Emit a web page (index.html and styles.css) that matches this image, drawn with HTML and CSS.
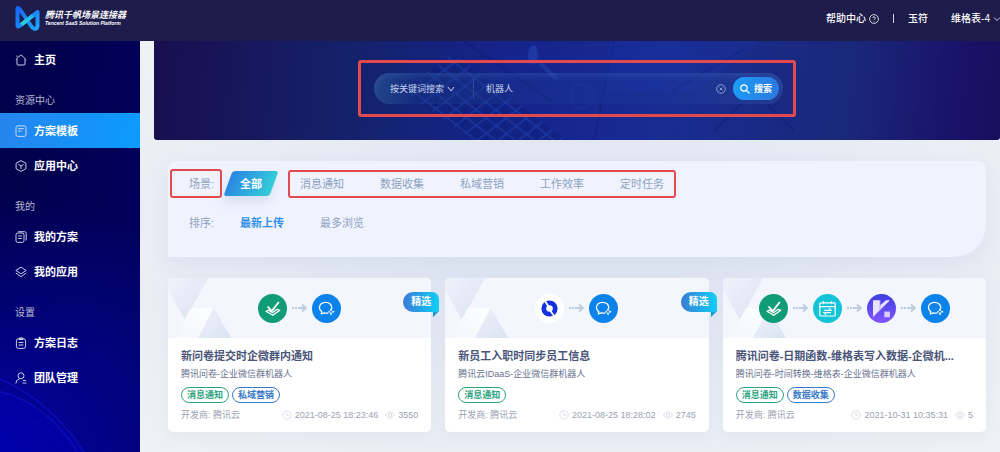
FILE: index.html
```html
<!DOCTYPE html>
<html lang="zh-CN">
<head>
<meta charset="utf-8">
<meta name="viewport" content="width=device-width, initial-scale=1">
<title>腾讯千帆场景连接器</title>
<link rel="stylesheet" href="styles.css">
</head>
<body>
<svg class="defs" aria-hidden="true">
  <defs>
    <linearGradient id="g-logo" x1="0" y1="0" x2="1" y2="1"><stop offset="0" stop-color="#1668f5"/><stop offset="1" stop-color="#20a4ff"/></linearGradient>
    <linearGradient id="g-logo2" x1="0" y1="1" x2="1" y2="0"><stop offset="0" stop-color="#27d9d0"/><stop offset="1" stop-color="#1fb4f0"/></linearGradient>
    <linearGradient id="g-vika" x1="0" y1="0" x2="0" y2="1"><stop offset="0" stop-color="#3f3fe0"/><stop offset="1" stop-color="#8156ff"/></linearGradient>
    <linearGradient id="g-badge" x1="0" y1="0" x2="1" y2="0"><stop offset="0" stop-color="#3a7bd5"/><stop offset="1" stop-color="#0fd0f5"/></linearGradient>
    <linearGradient id="g-tri" x1="0" y1="0" x2="1" y2="1"><stop offset="0" stop-color="#eef2fa"/><stop offset="1" stop-color="#dbe3f2"/></linearGradient>
    <linearGradient id="g-tri2" x1="0" y1="1" x2="1" y2="0"><stop offset="0" stop-color="#f3f6fc"/><stop offset="1" stop-color="#fdfeff"/></linearGradient>
  </defs>
  <symbol id="survey" viewBox="0 0 29 29"><circle cx="14.500" cy="14.500" r="14.500" fill="#119c78"/><path d="M9.500 12.500l4.300 4.500 7-9" fill="none" stroke="#fff" stroke-width="1.800"/><path d="M11 15.700l-3 1.600 6.800 4 7-5-2.700-1-4.500 3.400-4-2.300" fill="none" stroke="#fff" stroke-width="1.300" stroke-linejoin="round"/></symbol>
  <symbol id="wecom" viewBox="0 0 29 29"><circle cx="14.500" cy="14.500" r="14.500" fill="#0b83ea"/><path d="M16 18.900c-1.200.3-2.500.3-3.800-.1L9.300 20l.4-2.400C8 16.400 7.400 15 7.400 13.600c0-3 2.700-5.300 6.200-5.300s6.100 2.200 6.100 5v.9" fill="none" stroke="#fff" stroke-width="1.300" stroke-linecap="round" stroke-linejoin="round"/><path d="M19 15.400c.3 1.200 1 1.900 2.500 2.300-1.500.4-2.200 1.100-2.500 2.400-.3-1.300-1-2-2.400-2.400 1.400-.4 2.100-1.100 2.400-2.300z" fill="none" stroke="#fff" stroke-width="1"/><circle cx="19" cy="15.300" r=".8" fill="#fff"/><circle cx="21.500" cy="17.700" r=".8" fill="#fff"/><circle cx="19" cy="20.200" r=".8" fill="#fff"/></symbol>
  <symbol id="calendar" viewBox="0 0 29 29"><circle cx="14.500" cy="14.500" r="14.500" fill="#13c4d8"/><g fill="none" stroke="#fff" stroke-width="1.200"><rect x="6.800" y="8.800" width="15.400" height="13.200" rx="1"/><path d="M7 12.600h15M10.500 7v3.300M18.500 7v3.300M11 16.300h7l-2-1.900M18 18.700h-7l2 1.900"/></g></symbol>
  <symbol id="vika" viewBox="0 0 29 29"><circle cx="14.500" cy="14.500" r="14.500" fill="url(#g-vika)"/><path d="M6 6.200h7v5.300L19 6.200h4L6 23z" fill="#e9e2ff"/><path d="M13 6.200v10" stroke="#a99cf5" stroke-width=".8"/><rect x="17.300" y="17.600" width="5.600" height="5.600" fill="#d9ccff"/></symbol>
  <symbol id="idaas" viewBox="0 0 29 29"><circle cx="14.500" cy="14.500" r="14.500" fill="#fff"/><circle cx="14.500" cy="14.500" r="8.100" fill="#1330e2"/><circle cx="14.500" cy="14.500" r="3.300" fill="#fff"/><path d="M10 7l3.500 5.500M15.500 17l4 5.500" stroke="#fff" stroke-width="1.800"/></symbol>
  <symbol id="arrow" viewBox="0 0 15 10"><path d="M0 5h2M3 5h2M6 5h8M10 1.500L14 5l-4 3.500" fill="none" stroke="#bccddb" stroke-width="1.800"/></symbol>
  <symbol id="clock" viewBox="0 0 10 10"><circle cx="5" cy="5" r="4.200" fill="none" stroke="#cfd4de" stroke-width=".8"/><path d="M4.800 2.600v2.600h2.200" fill="none" stroke="#cfd4de" stroke-width=".8"/></symbol>
  <symbol id="eye" viewBox="0 0 10 10"><path d="M.6 5C2.500.8 7.500.8 9.400 5 7.500 9.200 2.500 9.200.6 5z" fill="none" stroke="#cfd4de" stroke-width=".8"/><circle cx="5" cy="5" r="1.600" fill="none" stroke="#cfd4de" stroke-width=".8"/></symbol>
  <symbol id="facets" viewBox="0 0 64 60"><path d="M0 0h40L17 42 0 12z" fill="url(#g-tri)"/><path d="M23 30h22L30 60H7z" fill="url(#g-tri2)"/><path d="M46 30l17 30H30z" fill="url(#g-tri)"/></symbol>
  <symbol id="ribbon" viewBox="0 0 36 27"><path d="M10 0h19a7 7 0 0 1 7 7v12l-6 6v-5H10a10 10 0 0 1 0-20z" fill="url(#g-badge)"/><path d="M36 19l-6 6v-5h3a3 3 0 0 0 3-3z" fill="#1478bd" opacity=".55"/></symbol>
</svg>

<header class="topbar">
  <a class="brand" href="#">
    <svg class="brand-mark" viewBox="0 0 27 27" aria-hidden="true"><path d="M3.500 4.500V20q0 2.500 2 1L23.500 7V21q0 3.500-3.500 2.500-1.500-.5-2.500-2L6 4.500q-2.500-3-2.500 0z" fill="none" stroke="url(#g-logo)" stroke-width="4" stroke-linejoin="round"/><path d="M7.500 19.500L19 10.500" stroke="url(#g-logo2)" stroke-width="4"/></svg>
    <span class="brand-text"><strong>腾讯千帆场景连接器</strong><small>Tencent SaaS Solution Platform</small></span>
  </a>
  <nav class="top-links" aria-label="账户">
    <a href="#">帮助中心<svg class="help" viewBox="0 0 10 10" aria-hidden="true"><circle cx="5" cy="5" r="4.400"/><path d="M3.700 4a1.300 1.300 0 1 1 1.900 1.200q-.6.300-.6.900M5 7v.7"/></svg></a>
    <i class="bar"></i>
    <a class="tenant" href="#">玉符</a>
    <a href="#">维格表-4<svg class="down" viewBox="0 0 8 8" aria-hidden="true"><path d="M1 2.500l3 3 3-3"/></svg></a>
  </nav>
</header>

<div class="shell">
  <aside class="sidebar">
    <svg class="waves" viewBox="0 0 140 90" preserveAspectRatio="none" aria-hidden="true"><path d="M0 22Q50 42 84 90H0z" fill="#0000b8" opacity=".4"/><path d="M0 8Q50 32 84 90M0 22Q45 34 78 90" fill="none" stroke="#1414d8" stroke-width="2" opacity=".5"/><path d="M0 36Q42 50 66 90M0 50Q34 60 52 90" fill="none" stroke="#0c0cc0" opacity=".4"/></svg>
    <nav aria-label="主导航">
      <a href="#"><svg viewBox="0 0 12 12"><path d="M.8 5.700L5.200 1.400q.8-.7 1.600 0l4.400 4.300M2 5v5q0 1 1 1h6q1 0 1-1V5M2 3V1.500"/></svg>主页</a>
      <h2>资源中心</h2>
      <a class="active" href="#"><svg viewBox="0 0 12 12"><rect x="1" y=".8" width="10" height="10.600" rx="1.800"/><path d="M3.200 3.600h5.600M3.200 6h3.200"/></svg>方案模板</a>
      <a href="#"><svg viewBox="0 0 12 12"><path d="M6 .6l4.900 2.700v5.400L6 11.400 1.100 8.700V3.300zM3.300 4.300L6 6l2.700-1.700M6 6v3"/></svg>应用中心</a>
      <h2>我的</h2>
      <a href="#"><svg viewBox="0 0 12 12"><rect x="1" y="2" width="8" height="9.400" rx="1.800"/><path d="M3 .7h6.500q1.700 0 1.700 1.700v7M3.200 5h3.600M3.200 7.500h3.600"/></svg>我的方案</a>
      <a href="#"><svg viewBox="0 0 12 12"><path d="M6 1.200l5.200 3.300L6 7.800.8 4.500zM.8 7L6 10.700 11.200 7"/></svg>我的应用</a>
      <h2>设置</h2>
      <a href="#"><svg viewBox="0 0 12 12"><rect x="1.400" y="1.800" width="9.200" height="9.600" rx="2"/><path d="M4 1.800q0-1 1-1h2q1 0 1 1v.7H4zM3.600 5.500h4.800M3.600 8h4.800"/></svg>方案日志</a>
      <a href="#"><svg viewBox="0 0 12 12"><circle cx="6" cy="3.800" r="3"/><path d="M.8 11.400q.3-3.600 3.500-4.600M8 8.500h3M7.500 11h4"/></svg>团队管理</a>
    </nav>
  </aside>

  <main class="content">
    <section class="banner">
      <svg class="banner-art" viewBox="0 0 846 99" preserveAspectRatio="xMidYMid slice" aria-hidden="true">
        <defs><pattern id="keys" width="13" height="12" patternUnits="userSpaceOnUse" patternTransform="rotate(38) skewX(-14)"><rect width="13" height="12" fill="#1f42ae"/><rect x="1" y="1" width="11" height="10" rx="1" fill="#0d1f78"/></pattern></defs>
        <path d="M298 12L412 99H320L250 50z" fill="url(#keys)" opacity=".45"/>
        <path d="M310 0l90 62M460 0l-20 99M590 8l-72 42M560 90l40-40 40 40" stroke="#0a1768" stroke-width="2" fill="none" opacity=".3"/>
        <path d="M455 0h150l-60 50-95 0z" fill="#1a36b4" opacity=".2"/>
        <circle cx="428" cy="55" r="12" fill="none" stroke="#3458c8" opacity=".2"/>
        <ellipse cx="379" cy="14" rx="5" ry="10" fill="#3464d0" opacity=".3"/><path d="M386 22l18 17" stroke="#3464d0" stroke-width="4" opacity=".25"/>
      </svg>
      <div class="search-mark">
        <form class="search" role="search">
          <span class="select-wrap">
            <select aria-label="搜索方式"><option>按关键词搜索</option></select>
            <svg class="down" viewBox="0 0 8 8" aria-hidden="true"><path d="M1 2l3 4 3-4"/></svg>
          </span>
          <input type="text" aria-label="关键词" value="机器人">
          <button class="clear" type="reset" aria-label="清除"><svg viewBox="0 0 10 10"><circle cx="5" cy="5" r="4.300"/><path d="M3.500 3.500l3 3M6.500 3.500l-3 3"/></svg></button>
          <button class="go" type="button"><svg viewBox="0 0 10 10" aria-hidden="true"><circle cx="4" cy="4" r="3.200"/><path d="M6.400 6.400L9.500 9.500"/></svg>搜索</button>
        </form>
      </div>
    </section>

    <section class="filters" aria-label="筛选">
      <div class="filter-row">
        <span class="filter-label marked">场景:</span>
        <a class="chip" href="#"><span>全部</span></a>
        <div class="scenes">
          <a href="#">消息通知</a><a href="#">数据收集</a><a href="#">私域营销</a><a href="#">工作效率</a><a href="#">定时任务</a>
        </div>
      </div>
      <div class="filter-row">
        <span class="filter-label">排序:</span>
        <div class="orders"><a class="current" href="#">最新上传</a><a href="#">最多浏览</a></div>
      </div>
    </section>

    <section class="cards" aria-label="方案列表">
      <article class="card">
        <div class="flow">
          <svg class="facets" aria-hidden="true"><use href="#facets"/></svg>
          <svg class="app"><use href="#survey"/></svg><svg class="arrow"><use href="#arrow"/></svg><svg class="app"><use href="#wecom"/></svg>
        </div>
        <span class="ribbon"><svg aria-hidden="true"><use href="#ribbon"/></svg><b>精选</b></span>
        <div class="info">
          <h3>新问卷提交时企微群内通知</h3>
          <p>腾讯问卷-企业微信群机器人</p>
          <div class="tags"><span class="tag green">消息通知</span><span class="tag blue">私域营销</span></div>
          <div class="meta"><span class="dev">开发商: 腾讯云</span><svg><use href="#clock"/></svg><time>2021-08-25 18:23:46</time><svg class="eye"><use href="#eye"/></svg><span>3550</span></div>
        </div>
      </article>
      <article class="card">
        <div class="flow">
          <svg class="facets" aria-hidden="true"><use href="#facets"/></svg>
          <svg class="app"><use href="#idaas"/></svg><svg class="arrow"><use href="#arrow"/></svg><svg class="app"><use href="#wecom"/></svg>
        </div>
        <span class="ribbon"><svg aria-hidden="true"><use href="#ribbon"/></svg><b>精选</b></span>
        <div class="info">
          <h3>新员工入职时同步员工信息</h3>
          <p>腾讯云IDaaS-企业微信群机器人</p>
          <div class="tags"><span class="tag green">消息通知</span></div>
          <div class="meta"><span class="dev">开发商: 腾讯云</span><svg><use href="#clock"/></svg><time>2021-08-25 18:28:02</time><svg class="eye"><use href="#eye"/></svg><span>2745</span></div>
        </div>
      </article>
      <article class="card">
        <div class="flow">
          <svg class="facets" aria-hidden="true"><use href="#facets"/></svg>
          <svg class="app"><use href="#survey"/></svg><svg class="arrow"><use href="#arrow"/></svg><svg class="app"><use href="#calendar"/></svg><svg class="arrow"><use href="#arrow"/></svg><svg class="app"><use href="#vika"/></svg><svg class="arrow"><use href="#arrow"/></svg><svg class="app"><use href="#wecom"/></svg>
        </div>
        <div class="info">
          <h3>腾讯问卷-日期函数-维格表写入数据-企微机...</h3>
          <p>腾讯问卷-时间转换-维格表-企业微信群机器人</p>
          <div class="tags"><span class="tag green">消息通知</span><span class="tag blue">数据收集</span></div>
          <div class="meta"><span class="dev">开发商: 腾讯云</span><svg><use href="#clock"/></svg><time>2021-10-31 10:35:31</time><svg class="eye"><use href="#eye"/></svg><span>5</span></div>
        </div>
      </article>
    </section>
  </main>
</div>
</body>
</html>
```
FILE: styles.css
```css
* { box-sizing: border-box; }

body {
  margin: 0;
  min-height: 100vh;
  display: flex;
  flex-direction: column;
  overflow-x: hidden;
  background: #e9edf4;
  font: 11px/16px "Liberation Sans", "Noto Sans CJK SC", sans-serif;
}

a { color: inherit; text-decoration: none; }
h2, h3, p { margin: 0; }
button, input, select { font-family: inherit; border: 0; padding: 0; margin: 0; background: none; color: inherit; outline: 0; }
.defs { position: absolute; width: 0; height: 0; }

/* Top bar */
.topbar {
  display: flex;
  align-items: center;
  justify-content: space-between;
  height: 41px;
  padding: 0 0 4px 14px;
  background: #1d1c4b;
  color: #fff;
}
.brand { display: flex; align-items: center; gap: 4px; }
.brand-mark { width: 27px; height: 27px; }
.brand-text { display: flex; flex-direction: column; font-style: italic; white-space: nowrap; }
.brand-text strong { font-size: 9px; line-height: 10px; }
.brand-text small { font-size: 5px; line-height: 7px; font-weight: 700; }
.top-links { display: flex; align-items: center; font-size: 10px; font-weight: 500; }
.top-links a { display: flex; align-items: center; gap: 3px; white-space: nowrap; }
.bar { width: 1px; height: 9px; margin: 0 14px; background: #d5d5e2; }
.tenant { margin-right: 23px; }
.help { width: 10px; height: 10px; fill: none; stroke: #fff; stroke-width: 0.8; }
.down { width: 8px; height: 8px; flex: none; fill: none; stroke: #c4cdea; }
.top-links .down { margin-right: -1px; }

.shell { display: flex; flex: 1; }

/* Sidebar */
.sidebar {
  position: relative;
  width: 140px;
  flex: none;
  background: linear-gradient(100deg, #00004c 20%, #020262);
  color: #fff;
}
.sidebar::before {
  content: "";
  position: absolute;
  inset: 0;
  background: radial-gradient(circle at 0 100%, #0303a4, #03038000 60%);
}
.waves { position: absolute; left: 0; bottom: 0; width: 100%; height: 80px; }
.sidebar nav { position: relative; padding-top: 1px; }
.sidebar nav a {
  display: flex;
  align-items: center;
  gap: 7px;
  height: 35px;
  padding-left: 15px;
  font-weight: 600;
}
.sidebar nav svg { width: 12px; height: 12px; fill: none; stroke: #dfe3f5; stroke-width: 0.9; }
.sidebar nav a.active { background: linear-gradient(100deg, #2684ee, #0b9cfd); }
.sidebar h2 {
  height: 36px;
  padding: 16px 0 0 15px;
  font-size: 10px;
  font-weight: 400;
  color: #b9b9d0;
}

/* Content */
.content {
  flex: 1;
  min-width: 0;
  padding: 0 14px 19px 28px;
  background: radial-gradient(ellipse at 50% 50%, #dfe5f2 20%, #e8ecf4 60%, #eff1f4);
}

.banner {
  position: relative;
  display: flex;
  justify-content: center;
  align-items: center;
  height: 99px;
  padding-bottom: 4px;
  margin: 0 -14px 0 -14px;
  border-radius: 0 0 3px 3px;
  overflow: hidden;
  background: linear-gradient(95deg, #190e4f, #14226c 24%, #15238d 42%, #182c92 60%, #1a287a 82%, #19146c 93%, #180f5c);
}
.banner-art { position: absolute; inset: 0; width: 100%; height: 100%; }
.search-mark { position: relative; border: 3px solid #e34a4e; border-radius: 3px; padding: 10px 10px 10px 13px; width: 438px; max-width: 100%; }
.search {
  display: flex;
  align-items: center;
  height: 31px;
  padding: 0 4px 0 16px;
  border-radius: 16px;
  color: #c9d3ee;
  font-size: 9px;
  background: linear-gradient(90deg, #2a5c9f99, #1b3c8a66 10%, #2040a033 70%, #2e489f88);
  box-shadow: inset 0 3px 6px #3d6cba55;
}
.select-wrap { display: flex; align-items: center; gap: 0; width: 84px; height: 20px; padding-right: 14px; border-right: 1px solid #2f4c98; }
.select-wrap select { width: 57px; flex: none; height: 20px; font-size: 9px; appearance: none; }
.search input { flex: 1; min-width: 0; height: 20px; padding-left: 12px; font-size: 9px; }
.clear { display: flex; margin-right: 7px; }
.clear svg { width: 10px; height: 10px; fill: none; stroke: #a9b6e0; stroke-width: 0.8; }
.go {
  display: flex;
  align-items: center;
  justify-content: center;
  gap: 4px;
  width: 46px;
  height: 23px;
  border-radius: 12px;
  background: linear-gradient(100deg, #1e9cfb, #2b78dc);
  color: #fff;
  font-size: 9px;
  font-weight: 700;
}
.go svg { width: 10px; height: 10px; fill: none; stroke: #fff; stroke-width: 1.2; }

/* Filters */
.filters {
  display: flex;
  flex-direction: column;
  gap: 23px;
  margin: 21px 0;
  min-height: 96px;
  padding: 15px 21px;
  border-radius: 8px 8px 32px 0;
  background: #f0f2fe;
  box-shadow: 0 8px 20px #c3cfe855;
  color: #8da3bf;
}
.filter-row { display: flex; align-items: center; white-space: nowrap; }
.filter-label { position: relative; width: 51px; }
.marked::before, .scenes::before {
  content: "";
  position: absolute;
  inset: -7px 18px -6px -19px;
  border: 2px solid #e34a4e;
  border-radius: 3px;
}
.chip { position: relative; width: 60px; color: #fff; font-weight: 700; }
.chip::before {
  content: "";
  position: absolute;
  inset: -5px 26px -4px -12px;
  border-radius: 3px;
  transform: skewX(-20deg);
  background: linear-gradient(100deg, #2a84e2, #35cfd8);
  box-shadow: 0 6px 10px #8ea8d044;
}
.chip span { position: relative; }
.scenes, .orders { position: relative; display: flex; gap: 36px; }
.scenes::before { inset: -6px -12px; }
.current { color: #3190e8; font-weight: 700; }

/* Cards */
.cards { display: grid; grid-template-columns: repeat(3, minmax(0, 1fr)); gap: 14px; }
.card { position: relative; border-radius: 5px; background: #fff; box-shadow: 0 5px 14px #c3cce033; }
.flow {
  position: relative;
  display: flex;
  align-items: center;
  justify-content: center;
  gap: 5px;
  height: 60px;
  border-radius: 5px 5px 0 0;
  overflow: hidden;
  background: #f3f6fc;
}
.facets { position: absolute; left: 0; top: 0; width: 64px; height: 60px; }
.app { position: relative; width: 29px; height: 29px; }
.arrow { width: 15px; height: 10px; }
.ribbon { position: absolute; top: 14px; right: -8px; width: 36px; height: 27px; color: #fff; }
.ribbon svg { position: absolute; inset: 0; width: 36px; height: 27px; }
.ribbon b { position: relative; display: block; text-align: center; font-size: 10px; line-height: 20px; font-weight: 600; }
.info { padding: 9px 13px; color: #68718f; font-size: 9px; }
.info h3 {
  overflow: hidden;
  text-overflow: ellipsis;
  white-space: nowrap;
  font-size: 11px;
  line-height: 18px;
  font-weight: 600;
  color: #4a5478;
}
.info p { margin-top: 1px; white-space: nowrap; overflow: hidden; text-overflow: ellipsis; }
.tags { display: flex; gap: 3px; margin-top: 5px; }
.tag { height: 16px; padding: 0 5px; border: 1px solid; border-radius: 8px; line-height: 14px; font-weight: 600; }
.green { color: #2ba37e; }
.blue { color: #3a7bc8; }
.meta { display: flex; align-items: center; gap: 3px; margin-top: 4px; color: #9ba2b3; white-space: nowrap; }
.dev { flex: 1; }
.meta svg { width: 10px; height: 10px; flex: none; }
.meta .eye { margin-left: 4px; }
```
